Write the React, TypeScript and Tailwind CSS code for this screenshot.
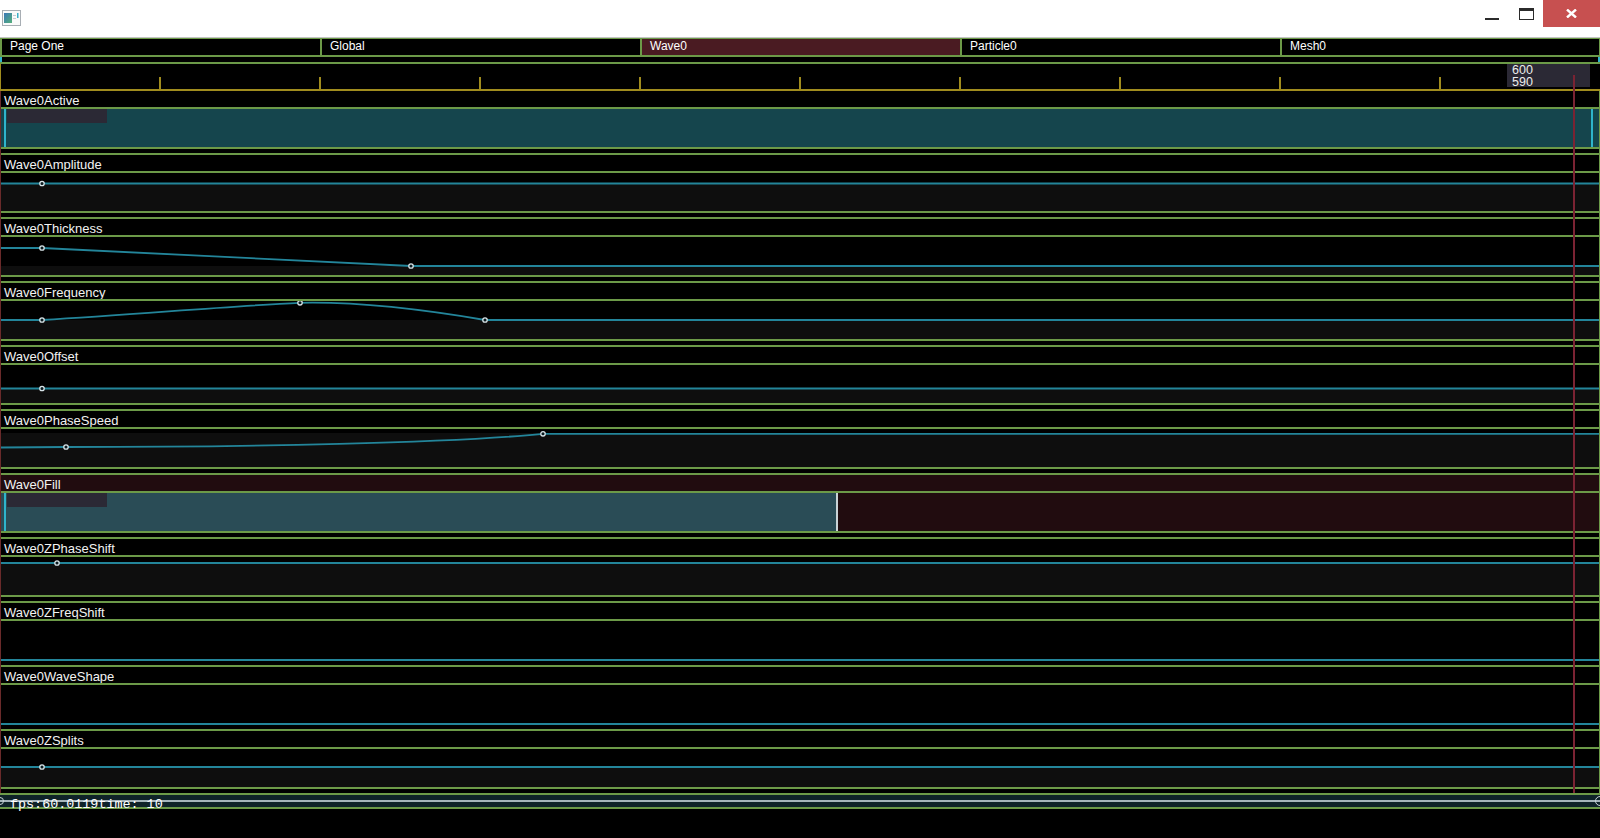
import React from "react";

type TrackDef = {
  name: string;
  kind: "active" | "fill" | "curve" | "flat";
  path?: string;
  dots?: [number, number][];
  shade?: number;
};

const tracks: TrackDef[] = [
  { name: "Wave0Active", kind: "active" },
  { name: "Wave0Amplitude", kind: "curve", path: "M0 10.5 L1598 10.5", dots: [[41, 10.5]], shade: 10 },
  { name: "Wave0Thickness", kind: "curve", path: "M0 11 L41 11 L410 29 L1598 29", dots: [[41, 11], [410, 29]], shade: 29 },
  {
    name: "Wave0Frequency",
    kind: "curve",
    path: "M0 19 L41 19 C 140 13, 230 5, 299 1.8 C 360 0.5, 420 8, 484 19 L1598 19",
    dots: [[41, 19], [299, 1.8], [484, 19]],
    shade: 19,
  },
  { name: "Wave0Offset", kind: "curve", path: "M0 23.5 L1598 23.5", dots: [[41, 23.5]], shade: 23 },
  {
    name: "Wave0PhaseSpeed",
    kind: "curve",
    path: "M0 18.5 L65 18 C 250 18, 450 14, 542 4.8 L1598 4.8",
    dots: [[65, 18], [542, 4.8]],
    shade: 4,
  },
  { name: "Wave0Fill", kind: "fill" },
  { name: "Wave0ZPhaseShift", kind: "curve", path: "M0 6 L1598 6", dots: [[56, 6]], shade: 6 },
  { name: "Wave0ZFreqShift", kind: "flat" },
  { name: "Wave0WaveShape", kind: "flat" },
  { name: "Wave0ZSplits", kind: "curve", path: "M0 18 L1598 18", dots: [[41, 18]], shade: 18 },
];

const tabs = ["Page One", "Global", "Wave0", "Particle0", "Mesh0"];

function TrackContent({ track }: { track: TrackDef }) {
  if (track.kind === "active") {
    return (
      <div className="flex h-[38px] bg-[#15454d]">
        <div className="ml-[3px] w-[2px] bg-[#2fb4cc]" />
        <div className="ml-[1px] h-[14px] w-[100px] bg-[#2b2935]" />
        <div className="flex-1" />
        <div className="w-[2px] bg-[#2fb4cc]" />
        <div className="w-[6px]" />
      </div>
    );
  }

  if (track.kind === "fill") {
    return (
      <div className="flex h-[38px] bg-[#210c0f]">
        <div className="flex w-[835px] bg-[#2a4c56]">
          <div className="ml-[3px] w-[2px] bg-[#2fb4cc]" />
          <div className="ml-[1px] h-[14px] w-[100px] bg-[#2b2935]" />
        </div>
        <div className="w-[2px] bg-[#c9d3d6]" />
      </div>
    );
  }

  if (track.kind === "flat") {
    return <div className="h-[38px] bg-black" />;
  }

  return (
    <svg width={1598} height={38} viewBox="0 0 1598 38" className="block">
      <rect x={0} y={track.shade} width={1598} height={38 - (track.shade ?? 0)} fill="#0e0e0e" />
      <path d={track.path} fill="none" stroke="#23859a" strokeWidth={1.8} />
      {track.dots?.map(([x, y], i) => (
        <circle key={i} cx={x} cy={y} r={2.2} fill="#0b1a1f" stroke="#d8e4e8" strokeWidth={1.3} />
      ))}
    </svg>
  );
}

function Track({ track, first }: { track: TrackDef; first: boolean }) {
  const isFill = track.kind === "fill";
  return (
    <div className="flex flex-col">
      {!first && <div className="h-[2px] bg-[#6c9a48]" />}

      {/* LABEL */}
      <div
        className={`h-[16px] overflow-hidden pl-[3px] pt-[2px] text-[13px] leading-[15px] text-[#f2f2f2] ${
          isFill ? "bg-[#210c0f]" : "bg-black"
        }`}
      >
        {track.name}
      </div>
      <div className="h-[2px] bg-[#6c9a48]" />

      {/* CURVE / VALUE */}
      <TrackContent track={track} />

      <div className={`h-[2px] ${track.kind === "flat" ? "bg-[#23859a]" : "bg-[#6c9a48]"}`} />
      <div className="h-[4px] bg-black" />
    </div>
  );
}

export default function App() {
  return (
    <div className="flex min-h-screen w-[1600px] flex-col bg-black font-['Liberation_Sans',Arial,sans-serif]">

      {/* TITLE BAR */}
      <div className="flex h-[38px] items-start justify-between border-b border-[#c4c4c4] bg-white">
        <svg width={19} height={16} viewBox="0 0 19 16" className="ml-[2px] mt-[10px]">
          <defs>
            <linearGradient id="ico" x1="0" y1="0" x2="1" y2="1">
              <stop offset="0" stopColor="#3b78b8" />
              <stop offset="1" stopColor="#55b07a" />
            </linearGradient>
          </defs>
          <rect x={0.5} y={0.5} width={18} height={15} fill="#fafafa" stroke="#a8aeb4" />
          <rect x={2} y={3} width={8} height={10} fill="url(#ico)" />
          <rect x={11} y={5} width={3} height={1} fill="#c6ccd2" />
          <rect x={11} y={8} width={3} height={1} fill="#c6ccd2" />
          <rect x={15} y={3} width={1.5} height={5} fill="#3ab0c8" />
        </svg>

        <div className="flex">
          <div className="flex h-[27px] w-[34px] justify-center pt-[18px]">
            <div className="h-[2px] w-[14px] bg-[#2b2b2b]" />
          </div>
          <div className="flex h-[27px] w-[34px] justify-center pt-[8px]">
            <div className="h-[12px] w-[15px] border border-t-[3px] border-[#2b2b2b]" />
          </div>
          <div className="flex h-[27px] w-[57px] items-center justify-center bg-[#c75050]">
            <svg width={11} height={9} viewBox="0 0 11 9">
              <path d="M1 0.5 L10 8.5 M10 0.5 L1 8.5" stroke="#ffffff" strokeWidth={2.4} />
            </svg>
          </div>
        </div>
      </div>

      {/* BODY */}
      <div className="relative flex flex-1 flex-col bg-black">

        {/* TABS */}
        <div className="flex h-[19px] border-t border-b-2 border-r border-[#6c9a48]">
          {tabs.map((t, i) => (
            <div
              key={t}
              className={`border-l-2 border-[#6c9a48] pl-[8px] pt-[1px] text-[12px] leading-[12px] text-white ${
                i === 4 ? "flex-1" : "w-[320px]"
              } ${i === 0 ? "border-l" : ""} ${t === "Wave0" ? "bg-[#4a1b22]" : "bg-black"}`}
            >
              {t}
            </div>
          ))}
        </div>

        {/* SCROLL STRIP */}
        <div className="flex h-[7px] justify-between border-b-2 border-[#6c9a48]">
          <div className="h-[5px] w-[2px] bg-[#2fb4cc]" />
          <div className="h-[5px] w-[2px] bg-[#2fb4cc]" />
        </div>

        {/* RULER */}
        <div className="relative flex h-[27px] items-end border-b-2 border-l border-[#a08c1e]">
          <div className="w-[158px]" />
          {Array.from({ length: 9 }).map((_, i) => (
            <div key={i} className="h-[12px] w-[160px] border-l-2 border-[#a08c1e]" />
          ))}
          <div className="absolute left-[1506px] top-0 h-[23px] w-[83px] bg-[#2b2935] pl-[5px] pt-[1px] text-[12.5px] leading-[11.5px] text-[#ececec]">
            <div>600</div>
            <div>590</div>
          </div>
        </div>

        {/* TRACKS */}
        <div className="flex flex-col border-l border-r border-l-[#6a2a2a] border-r-[#6c9a48]">
          {tracks.map((t, i) => (
            <Track key={t.name} track={t} first={i === 0} />
          ))}
        </div>

        {/* STATUS */}
        <div className="relative h-[16px] border-t-2 border-b-2 border-[#6c9a48] bg-[#0f2329]">
          <div className="absolute left-0 right-0 top-[5px] h-[1.5px] bg-[#a5b5bb]" />
          <div className="absolute -left-[4px] top-[2px] h-[8px] w-[8px] rounded-full border border-[#c8d4d8]" />
          <div className="absolute -right-[5px] top-[1px] h-[10px] w-[10px] rounded-full border border-[#c8d4d8]" />
          <div className="relative pl-[10px] pt-[3px] font-['Liberation_Mono',monospace] text-[13.4px] leading-[14px] text-white">
            fps:60.0119time: 10
          </div>
        </div>

        {/* PLAYHEAD */}
        <div className="absolute left-[1573px] top-[37px] h-[718px] w-[2px] bg-[#7b2333]" />
      </div>
    </div>
  );
}
